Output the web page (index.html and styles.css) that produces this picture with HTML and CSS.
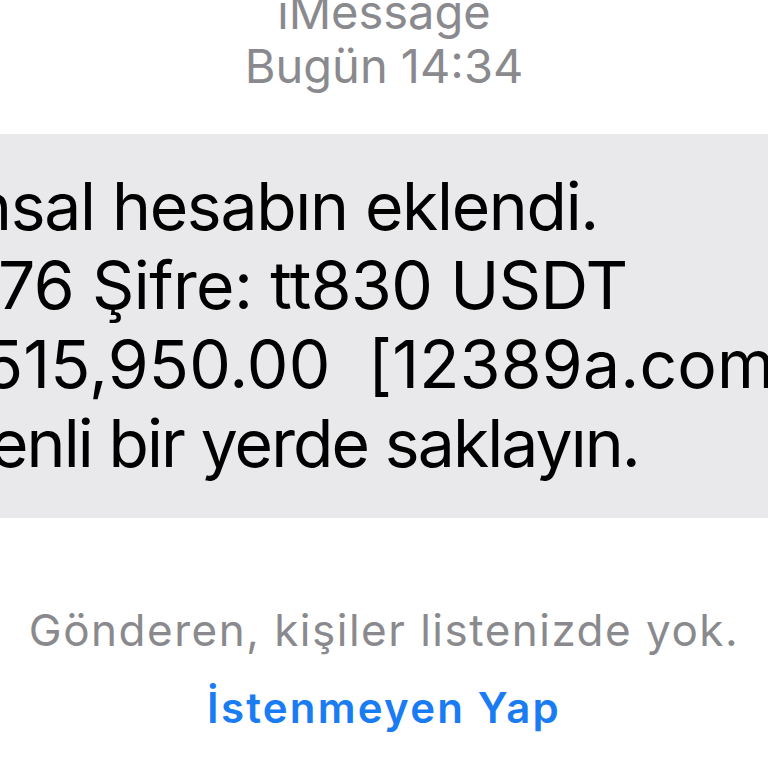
FILE: index.html
```html
<!DOCTYPE html>
<html lang="tr">
<head>
<meta charset="utf-8">
<title>iMessage</title>
<link rel="stylesheet" href="styles.css">
</head>
<body>
<div class="screen">
  <header class="meta">
    <div class="meta-line">ıMessage</div>
    <div class="meta-line">Bugün 14:34</div>
  </header>
  <section class="bubble">
    <div class="msg-line l1">nsal hesabın eklendi.</div>
    <div class="msg-line l2">76 Şifre: tt830 USDT</div>
    <div class="msg-line l3">515,950.00  [12389a.com]</div>
    <div class="msg-line l4">enli bir yerde saklayın.</div>
  </section>
  <p class="notice">Gönderen, kişiler listenizde yok.</p>
  <a class="report" href="#">İstenmeyen Yap</a>
</div>
</body>
</html>
```
FILE: styles.css
```css
html, body {
  margin: 0;
  padding: 0;
  background: #ffffff;
}
body {
  width: 768px;
  height: 768px;
  overflow: hidden;
  font-family: Inter, "Liberation Sans", Arial, sans-serif;
}
.screen {
  display: flex;
  flex-direction: column;
  align-items: stretch;
}
.meta {
  margin-top: -15px;
  display: flex;
  flex-direction: column;
  align-items: center;
  color: #8a8a8e;
  font-size: 47px;
  line-height: 54px;
}
.bubble {
  margin-top: 41px;
  background: #e9e9eb;
  padding: 33px 0 35px 0;
  overflow: hidden;
  color: #000000;
  font-size: 66px;
  line-height: 79px;
}
.msg-line {
  white-space: pre;
}
.l1 { margin-left: -27px; letter-spacing: -1.3px; }
.l2 { margin-left: -2px; letter-spacing: -0.6px; }
.l3 { margin-left: -17px; letter-spacing: 0.2px; }
.l4 { margin-left: -10px; letter-spacing: -1.9px; }
.notice {
  margin: 84px 0 0 0;
  text-align: center;
  color: #8a8a8e;
  font-size: 44px;
  line-height: 56px;
  letter-spacing: 1.5px;
}
.report {
  margin-top: 22px;
  align-self: center;
  color: #1a7cf3;
  text-decoration: none;
  font-weight: 600;
  font-size: 42px;
  line-height: 56px;
  letter-spacing: 2.2px;
}
```
